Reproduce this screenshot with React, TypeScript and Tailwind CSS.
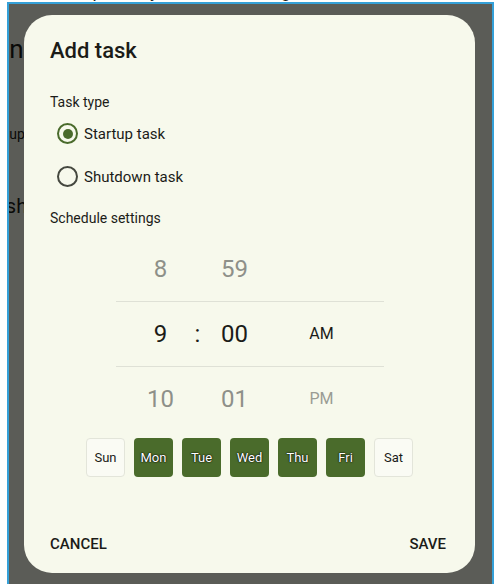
import React from "react";

const days = [
  { label: "Sun", on: false },
  { label: "Mon", on: true },
  { label: "Tue", on: true },
  { label: "Wed", on: true },
  { label: "Thu", on: true },
  { label: "Fri", on: true },
  { label: "Sat", on: false },
];

type RowProps = { h: string; m: string; p?: string; active?: boolean };

const PickerRow = ({ h, m, p, active }: RowProps) => {
  const tone = active ? "text-[#1b1c18]" : "text-[#8e9089]";
  return (
    <div className="flex h-[64px] items-center pl-[15px]">
      <div className={`w-[60px] text-center text-[24px] leading-none ${tone}`}>{h}</div>
      <div className="w-[14px] text-center text-[24px] leading-none text-[#1b1c18]">
        {active ? ":" : ""}
      </div>
      <div className={`w-[60px] text-center text-[24px] leading-none ${tone}`}>{m}</div>
      <div className="w-[27px]" />
      <div
        className={`w-[60px] text-center text-[16px] leading-none ${
          active ? "text-[#1b1c18]" : "text-[#9a9c94]"
        }`}
      >
        {p}
      </div>
    </div>
  );
};

const Radio = ({ checked, label }: { checked?: boolean; label: string }) => (
  <div className="flex h-[43px] items-center">
    <div
      className={`ml-[7px] flex h-[21px] w-[21px] items-center justify-center rounded-full border-2 ${
        checked ? "border-[#4a6b2c]" : "border-[#45483f]"
      }`}
    >
      {checked && <div className="h-[10px] w-[10px] rounded-full bg-[#4a6b2c]" />}
    </div>
    <span className="ml-[6px] text-[15px] leading-5 text-[#1b1c18]">{label}</span>
  </div>
);

export default function App() {
  return (
    <div className="h-[584px] w-[495px] overflow-hidden bg-white font-['Roboto',sans-serif]">
      {/* bits of the page above the frame */}
      <div className="h-[2px] overflow-hidden">
        <div className="-mt-[18px] pl-[52px] text-[18px] leading-[18px] text-[#1b1c18]">
          Set up a daily shutdown at night
        </div>
      </div>

      <div className="ml-[7px] h-[582px] w-[487px] border-2 border-b-0 border-[#34a0d8]">
        <div className="relative h-full overflow-hidden bg-[#f7f9ec]">
          {/* app screen behind the dialog */}
          <div className="flex flex-col text-[#1b1c18]">
            <div className="-ml-[30px] mt-[30px] text-[26px] leading-[30px]">Run</div>
            <div className="-ml-[30px] mt-[60px] text-[14px] leading-5">Startup</div>
            <div className="-ml-[35px] mt-[50px] text-[20px] leading-6">Finish</div>
          </div>

          {/* scrim + dialog */}
          <div className="absolute inset-0 flex items-center justify-center bg-black/[0.63]">
            <div className="flex h-[558px] w-[451px] -translate-x-[1px] flex-col rounded-[28px] bg-[#f7f9ec] px-[26px] pt-[22px] pb-[19px]">
              <h2 className="text-[22px] leading-[28px] font-medium text-[#1b1c18]">Add task</h2>

              <div className="mt-[27px] text-[14px] leading-5 text-[#1b1c18]">Task type</div>
              <Radio checked label="Startup task" />
              <Radio label="Shutdown task" />

              <div className="mt-[10px] text-[14px] leading-5 text-[#1b1c18]">Schedule settings</div>

              <div className="mx-auto mt-[9px] w-[268px]">
                <PickerRow h="8" m="59" />
                <div className="h-px bg-[#dfe1d6]" />
                <PickerRow h="9" m="00" p="AM" active />
                <div className="h-px bg-[#dfe1d6]" />
                <PickerRow h="10" m="01" p="PM" />
              </div>

              <div className="mt-[7px] flex justify-center gap-[9px]">
                {days.map((d) => (
                  <div
                    key={d.label}
                    className={`flex h-[39px] w-[39px] items-center justify-center rounded-[4px] text-[13px] ${
                      d.on
                        ? "bg-[#4a6b2b] text-white [text-shadow:0_0_2px_#000,0_0_1px_#000]"
                        : "border border-[#e3e5da] bg-[#fafbf4] text-[#1b1c18]"
                    }`}
                  >
                    {d.label}
                  </div>
                ))}
              </div>

              <div className="mt-auto flex items-center justify-between pr-[3px] text-[15px] leading-5 font-medium text-[#1b1c18]">
                <button>CANCEL</button>
                <button>SAVE</button>
              </div>
            </div>
          </div>
        </div>
      </div>
    </div>
  );
}
